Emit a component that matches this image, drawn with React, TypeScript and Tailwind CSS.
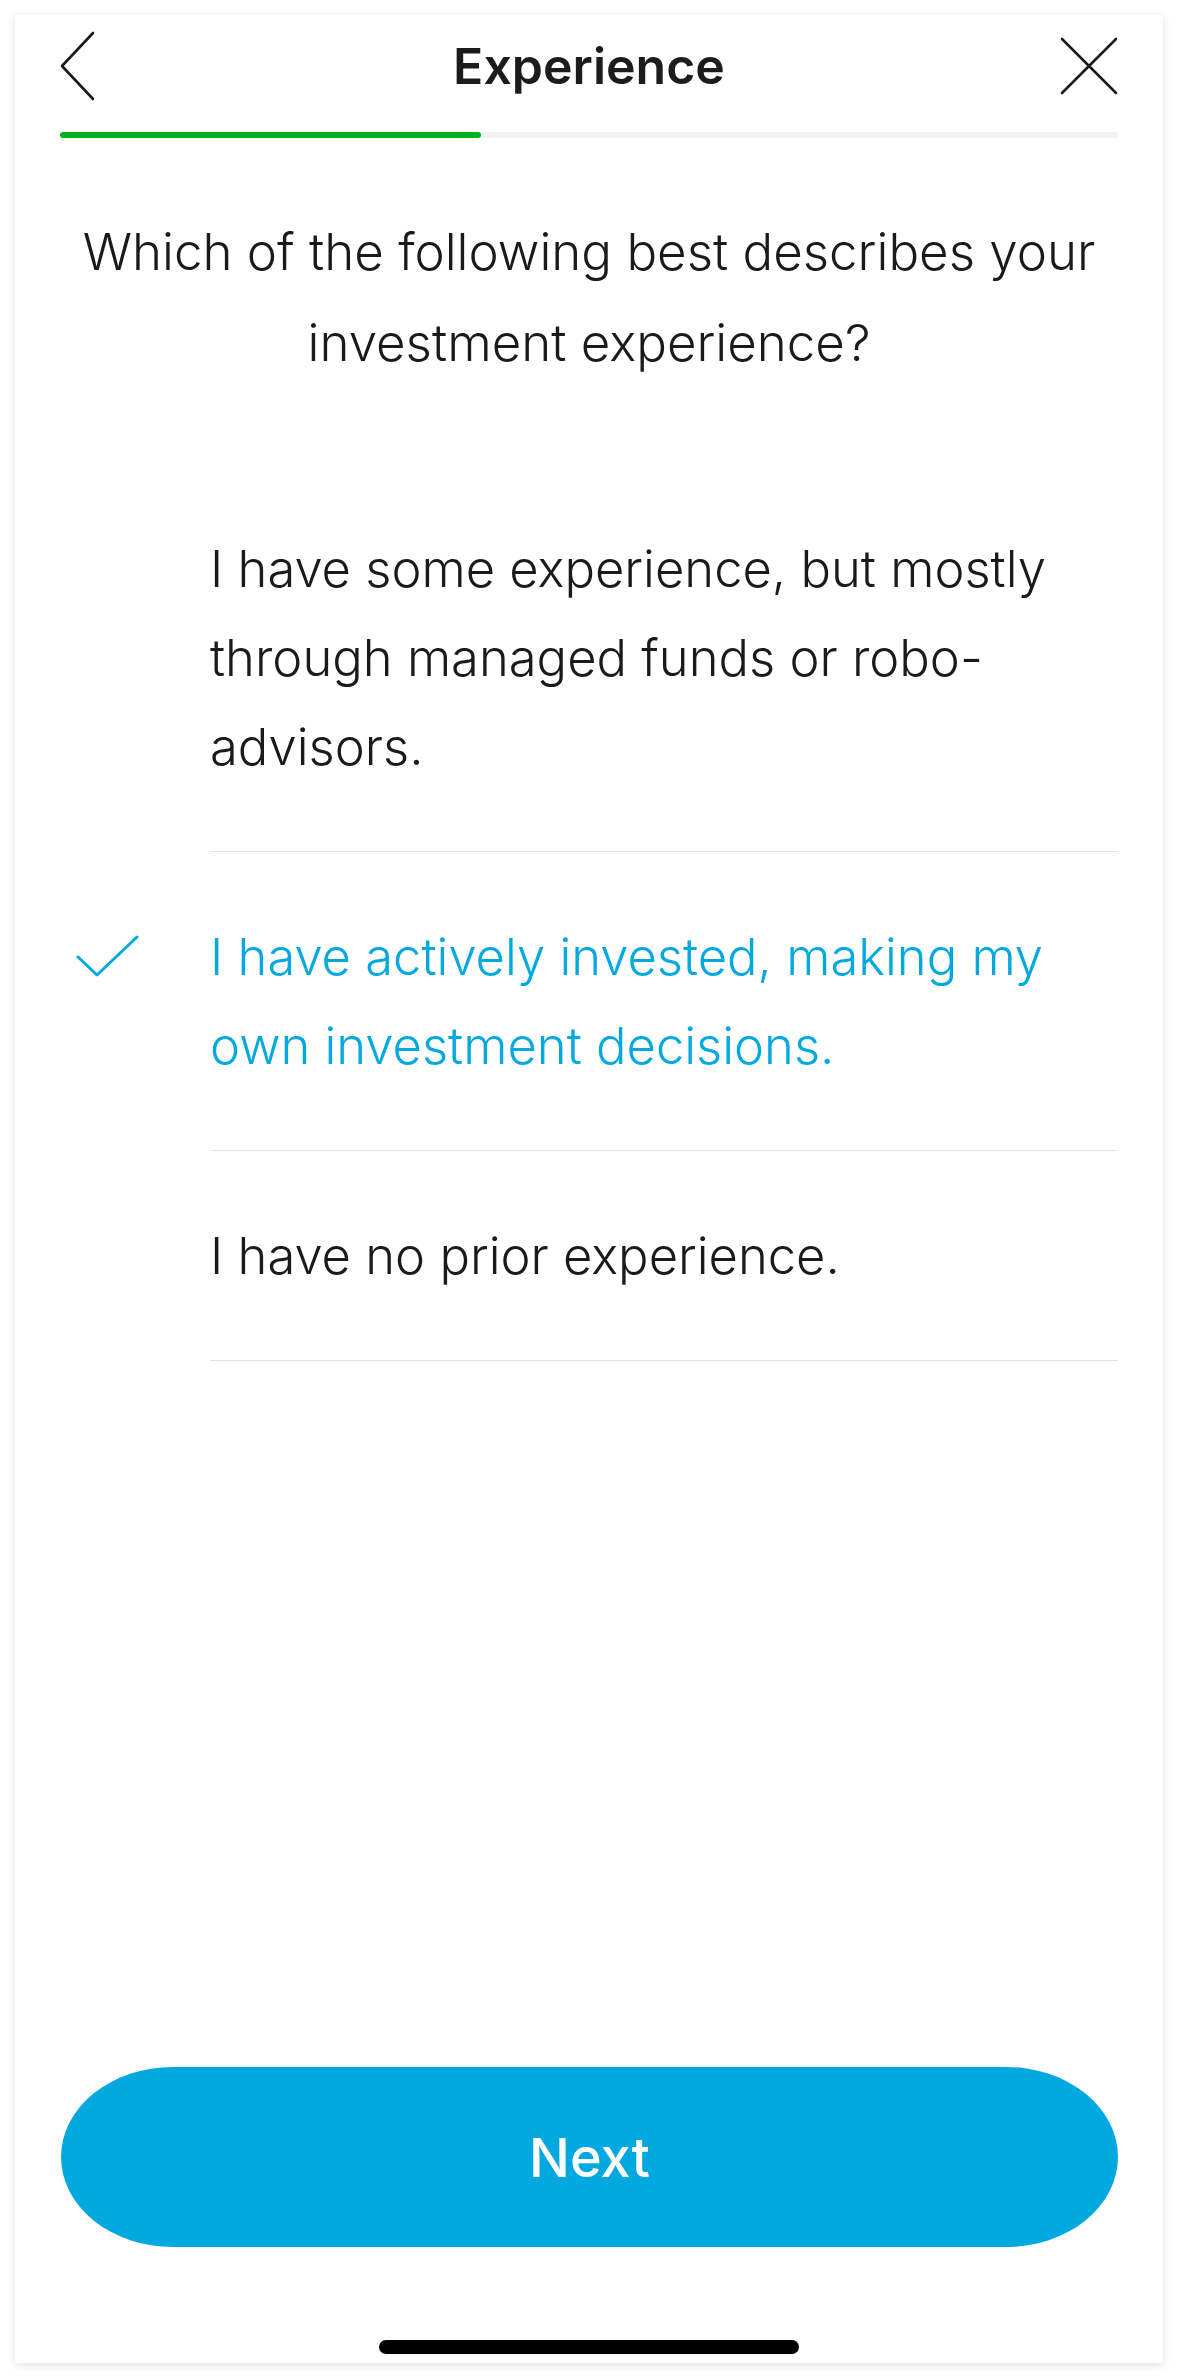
import { ReactNode } from "react";

const font = { fontFamily: "Inter, 'Liberation Sans', sans-serif" };

function ChevronLeft() {
  return (
    <svg width="36" height="70" viewBox="0 0 36 70" fill="none">
      <polyline
        points="33,2 2,35 33,68"
        stroke="#1a1a1a"
        strokeWidth="2.6"
        strokeLinecap="round"
        strokeLinejoin="round"
      />
    </svg>
  );
}

function CloseIcon() {
  return (
    <svg width="58" height="58" viewBox="0 0 58 58" fill="none">
      <path
        d="M2 2 L56 56 M56 2 L2 56"
        stroke="#1a1a1a"
        strokeWidth="2.6"
        strokeLinecap="round"
      />
    </svg>
  );
}

function CheckIcon() {
  return (
    <svg width="64" height="44" viewBox="0 0 64 44" fill="none">
      <polyline
        points="2,22 21,40 61,2"
        stroke="#02a8e0"
        strokeWidth="3"
        strokeLinecap="round"
        strokeLinejoin="round"
      />
    </svg>
  );
}

interface OptionProps {
  selected?: boolean;
  children: ReactNode;
}

function Option({ selected, children }: OptionProps) {
  return (
    <div className="relative pl-[150px]">
      {selected && (
        <div className="absolute left-[16px] top-[83px]">
          <CheckIcon />
        </div>
      )}
      <div
        className={`py-[60px] text-[50.7px] leading-[89px] font-[350] border-b border-[#e2e2e6] ${
          selected ? "text-[#02a8e0]" : "text-[#1a1a1a]"
        }`}
      >
        {children}
      </div>
    </div>
  );
}

export default function App() {
  return (
    <div className="w-[1179px] h-[2379px] bg-white p-[15px]" style={font}>
      <div className="w-[1148px] h-[2348px] bg-white flex flex-col px-[45px] shadow-[0_2px_8px_rgba(0,0,0,0.12)]">
        {/* header */}
        <div className="h-[102px] grid grid-cols-[80px_1fr_80px] items-center">
          <div className="flex justify-start">
            <ChevronLeft />
          </div>
          <h1 className="text-center text-[50px] font-semibold text-[#1c1c1c]">
            Experience
          </h1>
          <div className="flex justify-end">
            <CloseIcon />
          </div>
        </div>

        <div className="mt-[15px] h-[6px] rounded-full bg-[#f2f2f4] flex">
          <div className="w-[421px] h-full rounded-full bg-[#04b31b]"></div>
        </div>

        <p className="mt-[68px] text-center text-[51px] leading-[91px] font-[350] text-[#1a1a1a]">
          Which of the following best describes your
          <br />
          investment experience?
        </p>

        <div className="mt-[76px]">
          <Option>
            I have some experience, but mostly
            <br />
            through managed funds or robo-
            <br />
            advisors.
          </Option>
          <Option selected>
            I have actively invested, making my
            <br />
            own investment decisions.
          </Option>
          <Option>I have no prior experience.</Option>
        </div>

        <div className="mt-auto">
          <button className="w-[1057px] h-[180px] ml-[1px] rounded-[112px_/_90px] bg-[#02a8e0] text-white text-[54px] font-medium">
            Next
          </button>
          <div className="mt-[93px] pb-[9px] flex justify-center">
            <div className="w-[420px] h-[14px] rounded-full bg-black"></div>
          </div>
        </div>
      </div>
    </div>
  );
}
